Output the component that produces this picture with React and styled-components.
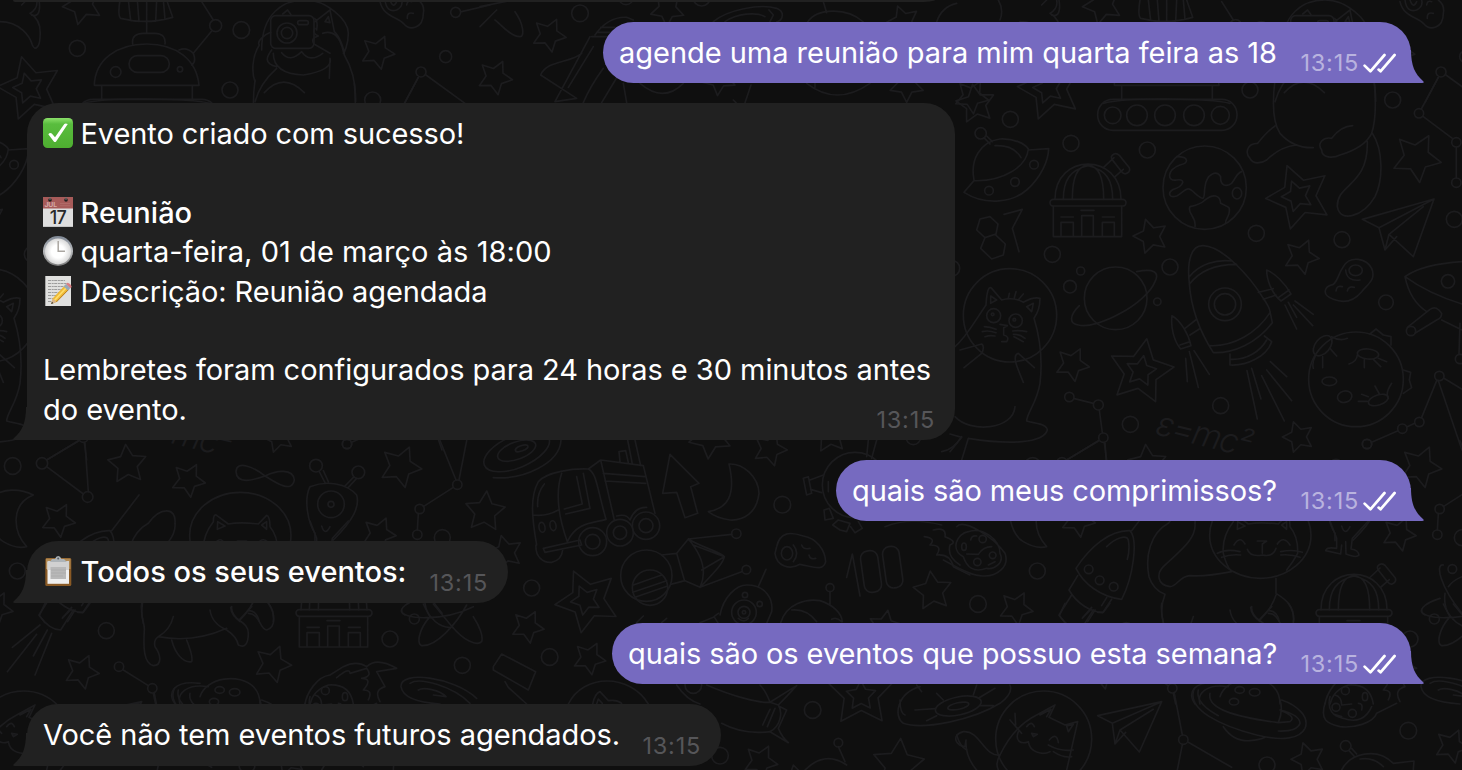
import React from 'react';
import styled, { createGlobalStyle, css } from 'styled-components';

const GlobalStyle = createGlobalStyle`
  html, body { margin: 0; background: #0f0f0f; }
  body { overflow: hidden; }
`;

const Screen = styled.main`
  position: relative;
  width: 1462px;
  height: 770px;
  overflow: hidden;
  background: #0f0f0f;
  color: #fff;
  font-family: Inter, 'Liberation Sans', sans-serif;
`;

const WallpaperSvg = styled.svg`
  position: absolute;
  inset: 0;
  fill: none;
  stroke: #1c1c1e;
  stroke-width: 5;
  stroke-linecap: round;
  stroke-linejoin: round;
`;

const Thread = styled.div`
  position: relative;
  display: flex;
  flex-direction: column;
  align-items: flex-start;
  gap: 20px;
  padding: 0 51px 0 27px;
`;

const PreviousBubble = styled.div`
  position: relative;
  width: 922px;
  height: 2px;
  margin-left: -14px;
  border-radius: 0 0 18px 2px / 0 0 2px 2px;
  background: #212121;
`;

const Bubble = styled.article`
  position: relative;
  box-sizing: border-box;
  display: flex;
  width: ${(p) => p.$width}px;
  height: ${(p) => p.$height}px;
  padding: 11px 20px 0 16px;
  ${(p) =>
    p.$out
      ? css`
          align-self: flex-end;
          background: #766ac0;
          border-radius: 30.5px 31px 0 30.5px;
          padding-right: 15px;
        `
      : css`
          background: #212121;
          border-radius: 31px 31px 31px 0;
        `}
`;

const TailSvg = styled.svg`
  position: absolute;
  bottom: 0;
  ${(p) => (p.$out ? 'right: -13px;' : 'left: -14px; transform: scaleX(-1);')}
  fill: ${(p) => (p.$out ? '#766ac0' : '#212121')};
`;

const Copy = styled.div`
  flex: 1;
  min-width: 0;
`;

const Line = styled.p`
  display: flex;
  align-items: center;
  gap: 7.5px;
  height: 39.42px;
  margin: 0;
  font-size: 29px;
  line-height: 39.42px;
  font-weight: ${(p) => (p.$strong ? 550 : 400)};
  letter-spacing: ${(p) => p.$track ?? -0.05}px;
  white-space: nowrap;
`;

const Meta = styled.footer`
  display: flex;
  align-items: center;
  align-self: flex-end;
  flex: none;
  gap: 4px;
  margin-bottom: 5px;
  color: ${(p) => (p.$out ? '#b9b3df' : '#565659')};
`;

const Time = styled.time`
  font-size: 23.5px;
  line-height: 30px;
  letter-spacing: 0.75px;
`;

const TicksSvg = styled.svg`
  margin-bottom: 1px;
`;

const EmojiSvg = styled.svg`
  flex: none;
  width: 30px;
  height: 30px;
  margin-bottom: 1px;
`;

function Tail({ out }) {
  return (
    <TailSvg $out={out} width="27" height="33" viewBox="0 0 27 33">
      <path d="M0 33V0H14C14 16 18 24 26 31Q28 33 25 33Z" />
    </TailSvg>
  );
}

function ReadTicks() {
  return (
    <TicksSvg width="33" height="20" viewBox="0 0 33 20" fill="none" stroke="#fff" strokeWidth="2.7" strokeLinecap="round" strokeLinejoin="round">
      <path d="M1.6 12.6 7.4 18.3 21.5 2" />
      <path d="M15.6 16.6 17.5 18.3 31.6 2" />
    </TicksSvg>
  );
}

function CheckEmoji() {
  return (
    <EmojiSvg viewBox="0 0 30 30">
      <defs>
        <linearGradient id="green" x2="0" y2="1">
          <stop offset="0" stopColor="#8be06a" />
          <stop offset=".2" stopColor="#59bd3e" />
          <stop offset="1" stopColor="#4eae30" />
        </linearGradient>
      </defs>
      <rect width="30" height="30" rx="4.5" fill="url(#green)" />
      <path d="M5.3 16.2Q7 14 8.8 15.5L12 19.2 21.3 6.1Q22.5 5 24.8 6.1L13.1 23.4Q12 24.6 10.8 23.4Z" fill="#fff" />
    </EmojiSvg>
  );
}

function CalendarEmoji() {
  return (
    <EmojiSvg viewBox="0 0 30 30">
      <path d="M0 0H30V30H0Z" fill="#dedede" />
      <path d="M0 0H30V11.5H0Z" fill="#a75b59" />
      <path d="M0 29H30V30H0Z" fill="#c5c5c5" />
      <g fill="#202020">
        <circle cx="7" cy="3" r="1.8" />
        <circle cx="23" cy="3" r="1.8" />
      </g>
      <path d="M7 0V3M23 0V3" stroke="#777" />
      <text x="1.4" y="10" fill="#d4aaa7" fontSize="6.8" fontWeight="700" letterSpacing="0">JUL</text>
      <path d="M17 6.5H27M17 8.7H27" stroke="#b06a67" strokeWidth="1" />
      <text x="14.8" y="27" fill="#292929" textAnchor="middle" fontSize="18" fontWeight="500" letterSpacing="-.8">17</text>
    </EmojiSvg>
  );
}

function ClockEmoji() {
  return (
    <EmojiSvg viewBox="0 0 30 30">
      <defs>
        <linearGradient id="rim" x2="0" y2="1">
          <stop offset="0" stopColor="#7e8794" />
          <stop offset=".5" stopColor="#b9bbbe" />
          <stop offset="1" stopColor="#777" />
        </linearGradient>
        <radialGradient id="face">
          <stop offset=".5" stopColor="#fff" />
          <stop offset="1" stopColor="#d8d8d8" />
        </radialGradient>
      </defs>
      <circle cx="15" cy="15" r="15" fill="url(#rim)" />
      <circle cx="15" cy="15.4" r="13" fill="url(#face)" />
      <path d="M15.2 5V15.3H22" fill="none" stroke="#aaa6a1" strokeWidth="1.5" />
    </EmojiSvg>
  );
}

function MemoEmoji() {
  return (
    <EmojiSvg viewBox="0 0 30 30">
      <path d="M2.3 0H28V30H2.3Z" fill="#e0e0de" />
      <g stroke="#8a8a8a" strokeWidth=".8" strokeDasharray="3 .7 2 .5">
        <path d="M5 4.5H22M5 7.5H25M5 10.5H22M5 13.5H19M5 16.5H17M5 19.5H14M5 22.5H12M5 25.5H10" />
      </g>
      <path d="M22 9.2 26 13.1 13.4 25.9 8.2 28 9.8 22.3Z" fill="#edb934" />
      <path d="M24 11 11.7 24.2" stroke="#ffdc68" strokeWidth="1.8" />
      <path d="M25.7 13.4 13.3 26" stroke="#b87818" strokeWidth="1" />
      <path d="M9.8 22.3 13.4 25.9 8.2 28Z" fill="#d9b58c" />
      <path d="M9 25.7 10.4 27.2 8.1 28Z" fill="#333" />
      <path d="M20.7 10.5 23 8 27.5 12.1 25 14.6Z" fill="#94a9ba" />
      <path d="M23 8 24.3 6.7Q28 7.5 28.7 10.9L27.3 12.2Z" fill="#d97f83" />
    </EmojiSvg>
  );
}

function ClipboardEmoji() {
  return (
    <EmojiSvg viewBox="0 0 30 30">
      <rect x="2.3" y="2" width="26" height="28" rx="1.5" fill="#8a5a25" />
      <path d="M3 2.6H27.5V13H3Z" fill="#b18a54" />
      <path d="M4.5 6H26V27.8H4.5Z" fill="#eee" />
      <path d="M4.5 5H26V14H4.5Z" fill="#d1d1d1" />
      <path d="M7.5 11H23V23H7.5Z" fill="#b8b8b8" />
      <path d="M8 14H23M8 17H23M8 20H20" stroke="#aaa" strokeWidth=".8" />
      <path d="M7 6 9 3H12Q13 0 15.2 0T18.4 3H21L24 6Z" fill="#aeb4b8" />
      <circle cx="15.2" cy="2.4" r="1" fill="#576068" />
    </EmojiSvg>
  );
}

const starPoints = ([x, y, r, turn]) =>
  Array.from({ length: 10 }, (_, i) => {
    const angle = ((turn + i * 36) * Math.PI) / 180;
    const size = i % 2 ? r * 0.51 : r;
    return `${(x + Math.cos(angle) * size).toFixed(1)},${(y + Math.sin(angle) * size).toFixed(1)}`;
  }).join(' ');

function Doodles({ at, stars = [], circles = [], ovals = [], path, children }) {
  return (
    <g transform={`translate(${at[0]} ${at[1]}) scale(.33333)`}>
      {stars.map((s, i) => <polygon key={i} points={starPoints(s)} />)}
      {circles.map(([cx, cy, r], i) => <circle key={i} cx={cx} cy={cy} r={r} />)}
      {ovals.map(([cx, cy, rx, ry, a = 0], i) => (
        <ellipse key={i} cx={cx} cy={cy} rx={rx} ry={ry} transform={`rotate(${a} ${cx} ${cy})`} />
      ))}
      <path d={path} />
      {children}
    </g>
  );
}

function Observatory({ x, y }) {
  return (
    <g transform={`translate(${x} ${y}) scale(.33333)`}>
      <path d="M-99-10C-99-151 99-151 99-10M-74-10C-74-68-54-98 0-111C56-98 74-68 74-10M-47-10C-47-68-34-111 0-111S47-68 47-10M-104 12V102H101V12M-81 102V59H-44V102M-19 102V39H16V102M43 102V59H79V102M-81 43H-44M-21 23H18M43 43H79M46-105 78-135M81-78 106-100M72-130Q66-140 78-146Q86-150 94-142L124-105Q128-93 116-88Q108-84 101-93Z" />
      <rect x="-114" y="-10" width="228" height="20" rx="10" />
    </g>
  );
}

function SpaceTile({ formula }) {
  return (
    <>
      <Doodles
        at={[0, 0]}
        stars={[[247, 15, 60, 175], [90, 265, 98, -105], [85, 265, 47, -105], [1133, 157, 52, -66]]}
        circles={[[232, 145, 24], [724, 90, 25], [1337, 170, 18], [347, 216, 16], [540, 208, 8], [647, 77, 18], [861, 99, 30], [861, 99, 17], [1263, 216, 15], [1367, 37, 15]]}
        path="M360 0C355 30 357 50 362 55Q440 75 518 52L500 0M385 0 392 62M412 0 417 65M440 0V66M470 0 467 64M490 0 495 58M440 65V100M398 132C395 108 410 100 430 100H465C490 100 497 115 495 132M283 256C285 180 350 132 440 132S590 180 597 256ZM305 258V298M577 258V298M250 310Q300 296 440 297T630 310M537 150Q560 140 580 160Q590 185 575 195M605 5 640 60M635 93 580 160M785 150C785 40 850 0 915 0S1045 60 1045 100C1045 140 1030 160 1030 160M848 42 863 30 873 44M945 65 990 30 1003 95C1020 110 1033 150 1033 165C1060 210 1068 260 1067 305M975 65 985 50 990 68ZM942 55Q955 60 950 90M968 100Q1015 85 1030 155M812 97C790 105 770 125 778 135C755 170 755 220 765 245M765 305Q780 250 830 205M815 150C800 170 790 190 830 200M820 160Q820 222 910 225Q1000 210 990 175L988 235M845 158Q870 190 905 155Q930 190 968 160M793 278Q850 215 913 278M945 85Q935 100 955 108Q930 115 942 132L990 160M1140 5C1150 50 1190 50 1210 70C1230 95 1270 85 1270 40Q1275 15 1255 0M1155 0Q1160 40 1190 30Q1210 20 1205 0M1170 0Q1180 28 1190 5M1220 15Q1222 0 1235 5M1222 55Q1220 35 1240 40M1255 232 1215 308M1278 225 1395 310M1385 35 1470 15M0 65C60 65 90 110 97 135C105 155 120 140 120 110Q125 60 90 40Q115 25 110 0"
      >
        <rect x="387" y="167" width="121" height="50" rx="25" />
        <rect x="812" y="47" width="130" height="98" rx="15" />
        <rect x="893" y="62" width="32" height="12" rx="6" />
      </Doodles>

      <Doodles
        at={[480, 0]}
        stars={[[45, 232, 53, -64], [207, 105, 52, -64], [562, 28, 52, 20], [1270, 65, 50, -110], [717, 235, 52, 95], [1280, 255, 52, 90], [1475, 290, 52, -60]]}
        circles={[[300, 40, 25], [665, -8, 26], [438, -8, 22]]}
        path="M0 20 100 0M0 80 50 30M105 35C130 70 135 110 120 110C90 110 60 70 45 60M345 105C370 70 400 50 440 52L460 60M335 110H380M350 97H390M362 82H405M330 110 225 305M305 160C270 190 200 180 182 225L290 295 225 305M340 140 265 262M370 205Q330 260 310 308M415 225 365 308M430 250 440 308M700 65C740 30 840 10 890 25C915 35 910 60 890 66M735 65C770 40 830 35 855 50M867 30 880 45 870 65M983 66C1010 25 1100 20 1150 66M1030 5 1040 38M480 250Q550 310 610 250M980 250Q1070 320 1170 250M1005 250V262M1370 66Q1385 20 1430 10M760 300 768 308M795 308 813 255"
      />

      <Doodles
        at={[960, 0]}
        stars={[[1017, 590, 100, -111], [1012, 588, 48, -111], [47, 312, 60, -99], [1370, 473, 75, -61], [572, 709, 53, -107]]}
        circles={[[151, 358, 24], [333, 430, 24], [562, 450, 24], [870, 270, 24], [1298, 300, 24], [889, 700, 24], [1146, 719, 24], [277, 763, 24], [1483, 658, 24], [458, 346, 25], [531, 346, 31], [615, 346, 31], [702, 346, 31], [781, 346, 27], [1377, 340, 14], [1489, 427, 14], [1489, 548, 14], [62, 400, 17], [222, 494, 13], [165, 546, 13], [87, 572, 13], [734, 563, 125]]}
        ovals={[[831, 580, 14, 17]]}
        path="M945 240C935 320 940 370 960 400Q1000 445 1060 443M1243 250C1250 330 1245 370 1235 400M945 378Q920 395 893 430C860 430 855 460 870 475C880 495 905 490 920 480Q960 440 1010 435M1178 377C1150 378 1130 395 1115 415C1090 410 1070 430 1085 450C1085 475 1120 475 1140 465C1190 450 1220 430 1235 400M1222 425C1225 560 1130 550 1132 620C1140 670 1210 650 1245 590C1270 540 1270 450 1237 400M1390 350 1477 415M1489 442V534M1435 232 1384 327M72 413 90 432M80 408 97 425M42 540C30 480 60 425 120 417C160 415 195 430 205 447C200 500 130 545 42 542L12 577C80 620 160 605 200 570C245 530 265 480 266 446L205 450M105 437C145 435 170 450 183 473M60 657 90 650 114 672 108 702 75 713 50 690ZM75 713 105 703 136 732 130 765 95 777 62 745ZM132 643 187 628 157 685 177 755M650 470C690 470 685 490 660 495C620 510 620 545 650 540C680 535 670 560 640 568C620 580 630 595 650 588C680 570 680 555 705 580C740 610 730 590 735 560C740 520 770 510 782 530C780 560 800 560 815 550C830 530 830 520 845 515M705 680C710 650 680 640 690 620C715 615 725 610 735 600C760 580 780 585 782 610C800 620 810 620 808 630C810 650 795 655 797 670M1422 597 1207 658 1257 683 1275 750 1310 710M1422 597 1360 770 1287 703 1275 750M1257 683 1422 597M1287 703 1390 620M115 0C130 25 125 50 120 60M245 15 260 0M275 45Q305 55 297 0"
      >
        <rect x="413" y="298" width="418" height="93" rx="45" />
      </Doodles>
      <Observatory x={1088} y={202.7} />
      <Observatory x={1354} y={613} />

      <Doodles
        at={[950, 230]}
        stars={[[1054, 80, 54, -66], [367, 403, 52, -63], [573, 425, 100, -80], [573, 423, 47, -80], [1045, 621, 48, -108]]}
        circles={[[497, 205, 94], [392, 123, 12], [360, 170, 19], [622, 215, 11], [660, 111, 24], [1308, 217, 22], [812, 527, 24], [541, 583, 24], [5, 115, 24], [180, 256, 140], [131, 257, 21], [197, 272, 20], [128, 253, 4], [193, 269, 4], [358, 501, 14], [445, 525, 15], [460, 623, 14], [1468, 438, 14], [1408, 576, 14], [1357, 596, 14], [1251, 642, 14], [825, 223, 49], [825, 223, 32], [1218, 448, 142], [1494, 154, 20], [1383, 303, 14], [1530, 387, 14]]}
        ovals={[[1217, 121, 20, 16], [1138, 454, 22, 13], [1184, 500, 22, 17, -15], [1254, 372, 32, 15, 5], [1118, 347, 35, 22, -50], [1285, 510, 31, 15, -18]]}
        path="M560 125C610 115 630 125 615 155C590 220 440 300 385 285C355 280 360 255 388 227M108 225C110 190 115 165 125 175L155 210Q190 200 220 217Q250 200 270 205Q270 240 252 265C275 340 277 400 270 460C260 520 230 550 230 573C250 580 290 580 292 600C280 640 180 645 55 625L35 690M108 225C70 280 50 320 15 350M122 220V198L140 210ZM230 230 250 220 245 245ZM150 283 172 287 161 293V315Q180 320 170 335L155 335M97 305Q115 300 138 308M103 290Q120 290 138 298M105 320Q120 315 135 318M188 303Q210 300 230 305M190 313Q210 312 225 325M192 320 220 335M175 205 178 190M193 203 198 185M207 207 220 192M30 360 95 342Q105 350 95 370L42 413M220 457C200 410 185 375 205 370L253 413M195 530C190 600 60 610 15 560M0 665 35 622 0 612M373 506 430 520M448 540 457 608M463 638 470 690M447 632 350 690M1460 452 1415 562M1394 580 1372 590M1344 602 1265 637M1482 445 1536 478M1465 452 1536 660M718 160C710 90 725 45 760 47C820 50 900 140 940 205Q960 235 960 245L967 278C920 340 850 370 790 368C740 290 722 220 718 160ZM718 140C750 100 800 88 845 93M718 163C750 120 800 103 860 103M780 347C850 350 920 310 960 248M840 372V405C890 408 950 380 965 335L943 318M843 388C890 390 930 365 950 330M950 120C975 130 1005 160 1023 192L993 213C965 190 950 150 950 120ZM1017 180 985 203M925 187 970 176M940 208 978 195M666 257C690 270 715 310 723 347L692 357C670 330 662 290 666 257ZM720 335 690 345M705 295 737 270M720 315 748 297M707 385 712 455M718 365 745 472M732 362 778 433M1005 225 1040 297M1015 217 1040 262M1035 213 1090 253M1030 225 1088 287M891 422 922 567M905 415 933 507M935 437 1003 573M950 420 1025 512M961 395 1010 440M1180 110C1200 75 1250 85 1265 115C1280 150 1250 165 1235 185C1210 215 1180 220 1150 208C1115 195 1120 170 1150 163C1165 150 1165 130 1180 110ZM1187 120Q1190 155 1230 150M1158 183Q1160 165 1177 170M1192 183Q1195 167 1213 172M1145 320Q1170 335 1192 325M1140 355 1160 378M1118 380V413M1097 375Q1085 400 1090 415M1260 312 1278 297 1300 315 1323 320V345M1222 375Q1220 395 1197 402M1243 388V413M1270 388 1292 410M1285 385 1310 395M1360 420 1382 427 1378 450 1385 473 1360 490M1275 468 1288 492M1325 460Q1305 490 1315 505M1235 493 1255 500M1225 514H1252M1536 95C1460 100 1400 115 1365 140C1420 180 1480 205 1536 222M1365 140C1375 190 1400 225 1430 245M1475 270 1536 300M1372 292 1440 238Q1460 225 1475 250Q1475 265 1460 270L1395 310M1530 280 1527 372"
      >
        {formula && (
          <text x="613" y="612" transform="rotate(14 613 612)" fill="#1c1c1e" stroke="none" fontFamily="Inter" fontWeight="300" fontStyle="italic" fontSize="102" letterSpacing="-5">ε=mc²</text>
        )}
      </Doodles>

      <Doodles
        at={[0, 400]}
        stars={[[382, 193, 60, -95], [565, 240, 52, -62], [175, 360, 52, -62], [245, 815, 53, -66], [818, 792, 57, -68], [1455, 335, 62, -85], [1137, 402, 52, -66]]}
        circles={[[38, 198, 25], [52, 513, 24], [319, 692, 24], [1170, 717, 24], [1387, 796, 24], [1327, 413, 24], [126, 190, 17], [263, 291, 16], [1372, 254, 14], [1259, 327, 14], [1252, 404, 14], [1243, 657, 15], [357, 800, 14], [457, 865, 14], [948, 197, 19], [1075, 217, 19], [993, 313, 40], [993, 313, 9], [976, 872, 12], [1041, 132, 14]]}
        ovals={[[659, 870, 14, 10], [704, 877, 16, 11], [642, 905, 14, 10], [1035, 890, 8, 12]]}
        path="M140 180 235 122M255 130 265 275M140 200 250 282M1320 122 1368 240M1400 122 1377 240M1360 262 1270 320M1255 341 1252 390M370 810 445 857M460 880 467 912M100 285C60 265 10 265-25 290C-40 330-30 400 10 425C35 440 60 445 80 440C35 390 35 310 100 285M425 610C420 650 435 670 433 690C430 740 430 790 460 797C490 795 480 760 465 740Q460 720 475 710Q510 690 520 650M475 710Q580 730 680 685M515 720C525 760 550 790 575 785Q580 770 560 720M630 630Q635 670 680 690Q710 710 715 735C735 745 745 730 745 700C745 660 695 665 692 622M720 657 755 620M745 640C780 640 780 690 800 690C830 680 825 640 805 610M445 370C480 320 530 320 525 370M120 675 37 742M110 703 22 815M142 690 100 768M155 700 105 825M135 610 118 647Q150 690 182 690M233 637 250 637 270 610M187 655 215 622M182 690 220 630M958 215 975 248M970 212 985 245M1060 232 1035 258M1070 235 1045 262M930 260C980 240 1040 250 1070 285C1080 320 1060 360 1000 420M930 260C910 300 925 370 945 400V422M965 378Q975 410 990 380M795 228C760 200 710 180 708 215C710 255 760 240 795 228C830 210 880 205 883 240C875 280 830 250 795 228ZM1205 630C1200 660 1330 665 1420 620M1270 612Q1300 680 1350 683M1300 612 1360 685M1290 650C1255 690 1250 730 1265 737C1310 740 1370 670 1400 615M1357 680C1390 720 1430 740 1445 725C1450 710 1440 680 1420 650M600 890C620 830 720 820 760 860Q780 880 780 912M600 850C520 840 500 880 525 912M625 860C560 850 530 880 540 912M915 912C920 880 950 830 990 825L1030 800Q1070 780 1100 800Q1130 770 1190 805Q1160 810 1130 815L1155 860Q1120 870 1140 905M1010 833Q1050 800 1050 820L1100 805Q1120 830 1085 835Q1120 835 1090 870Q1120 870 1105 900M930 912Q940 870 985 855Q1050 850 1060 912M1430 895C1360 830 1200 810 1203 860Q1210 905 1320 912M1230 850C1260 830 1360 860 1410 910M1255 870C1270 860 1320 870 1338 890L1300 885"
      />

      <Doodles
        at={[950, 430]}
        stars={[[1412, 110, 64, -66], [198, 535, 52, -62], [1075, 988, 52, -108], [1505, 948, 52, -66]]}
        circles={[[84, 522, 25], [1375, 902, 25], [951, 1005, 24], [416, 418, 13], [449, 451, 13], [491, 470, 13], [700, 929, 14], [1507, 417, 13], [1158, 832, 12], [1207, 850, 12], [281, 927, 144], [1187, 948, 16], [98, 327, 11], [128, 376, 10], [82, 396, 11]]}
        ovals={[[931, 316, 152, 129], [42, 350, 7, 11]]}
        path="M850 275Q850 250 860 256L895 282Q930 275 985 282L1010 256Q1020 260 1020 290Q1045 320 1043 370Q1030 395 1010 420M850 275Q815 320 820 370Q830 410 845 425M862 298 863 275 885 288ZM995 285 1010 275V298ZM852 345Q870 315 885 342M982 342Q1000 315 1020 345M922 333H950L937 342V370M892 358Q900 382 937 375Q970 382 978 355M802 370Q830 355 870 365M815 382Q840 372 872 375M1057 367Q1030 357 992 365M1050 382Q1025 372 992 375M845 425Q770 440 720 437C690 437 680 470 660 470C620 465 620 430 640 410C680 370 740 330 735 280M655 280C600 310 585 380 597 440Q610 480 645 493C630 530 635 560 640 580M978 445V490C1010 510 1035 530 1030 575M978 495Q965 535 930 570M905 530Q902 550 930 575M953 542Q980 540 988 575M378 415C420 350 480 300 540 302C565 330 550 440 515 508C450 500 400 460 378 415ZM383 437 357 480C380 520 420 545 458 548L485 508M365 495 327 555 345 578M455 527 470 503M398 563 425 537M413 575 435 540M545 302 627 195M470 350C500 320 530 315 535 330Q540 360 532 388M1140 273 1160 325V355Q1130 350 1127 362L1172 372 1175 345M1187 335 1188 372Q1220 385 1227 375Q1225 360 1203 357L1207 325 1255 273M673 790 697 915M715 937 845 1012M697 944 682 1020M1480 405C1455 400 1470 470 1536 550M1495 470Q1510 450 1536 440M1470 505C1420 520 1400 545 1425 555M1485 490Q1480 530 1500 560M733 775C705 840 820 890 920 915C1000 935 1050 925 1065 895C1080 860 1040 825 995 810M990 840Q1050 855 1050 880Q1040 905 985 903M745 780Q735 820 805 857M780 790C770 835 850 860 985 878Q1000 840 990 810M995 843Q1040 860 1020 875L985 878M820 890Q850 935 900 932Q930 930 945 922M1125 820C1110 870 1130 880 1170 890C1210 895 1270 880 1280 850L1340 820M1140 800C1130 840 1150 860 1180 865C1220 880 1250 865 1265 830M1155 795Q1175 800 1175 825L1205 822M1152 853 1175 860M1225 820Q1240 820 1235 840M150 975C100 980 90 900 40 905C0 915 20 950 45 950L48 930Q45 980 80 1020M150 975Q190 890 260 855L315 825 297 862 345 885 383 875 350 1020M270 855 303 838 290 860M350 888 370 883 355 905ZM230 890Q245 870 253 890M298 930Q320 905 325 938M205 905C195 930 210 945 235 935C240 970 280 975 300 965M245 910 262 913 250 920ZM150 975Q135 1000 145 1020M180 870 215 910M195 850 197 885M295 945Q330 965 370 960M310 965Q340 985 365 980M635 815 443 857 487 880 495 942 527 907M635 815 568 966 510 900 495 942M487 880 635 815M510 900 610 838M1197 962 1212 978M1205 955 1220 972M1175 1020C1200 970 1280 950 1330 1000L1392 993 1390 1020M1230 987Q1270 980 1300 1010M20 290C40 265 130 320 165 370C180 410 140 440 100 438C60 440 0 400-20 390M40 380C0 360 20 310 55 305C100 290 150 330 150 370C165 400 130 420 110 415C70 430 50 410 40 380ZM50 372 85 373Q100 350 125 350M62 330Q65 315 80 318M115 405 135 395"
      />

      <Doodles
        at={[480, 430]}
        stars={[[77, 367, 52, -105], [322, 512, 98, -115], [317, 510, 46, -115], [143, 590, 50, -63], [328, 685, 50, -63], [690, 22, 65, 95], [870, 57, 52, 75], [1050, 15, 55, 120], [1358, 483, 60, -97], [1143, 788, 105, 125], [1143, 797, 46, 125], [842, 995, 52, -63], [1255, 1005, 80, -85], [1215, 590, 50, -80]]}
        circles={[[155, 474, 24], [907, 224, 25], [209, 681, 25], [998, 840, 25], [720, 977, 25], [640, 765, 25], [1300, 22, 22], [338, 335, 42], [338, 335, 22], [420, 308, 40], [420, 308, 20], [498, 287, 41], [498, 287, 21], [499, 437, 77], [510, 473, 53], [769, 311, 14], [799, 419, 13], [792, 547, 37], [792, 547, 18], [792, 547, 5], [795, 495, 8], [839, 522, 8], [1050, 473, 12], [1125, 165, 98], [1075, 938, 13]]}
        ovals={[[110, 65, 105, 48, -23], [110, 62, 60, 26, -20], [125, 55, 20, 8, -20], [186, 292, 9, 15, -10], [219, 287, 9, 15, -10], [921, 370, 17, 20], [1435, 828, 70, 27, -12], [1435, 828, 32, 10, -12]]}
        path="M40 143C130 150 240 100 243 30M170 345C155 260 150 200 175 155C200 125 280 115 325 117L362 90 490 107 525 250M362 90 403 270M325 117C350 130 350 170 378 268C340 280 290 275 262 335C235 260 225 190 245 130M160 255Q200 260 235 240M173 230Q170 190 193 162M290 140 307 222 253 237M310 130 330 235 257 252M370 130 495 140M375 153 497 160M420 95 417 65 437 62 445 98M443 30 457 102M465 30 482 107M168 345C165 380 190 400 215 397Q245 390 248 360M190 355 300 330 305 345 195 367ZM410 258Q440 250 450 270Q465 230 500 232M570 73 657 160 632 170 653 250 615 263 590 187 548 190ZM747 102C790 100 835 140 837 190C830 250 790 272 750 270Q710 265 685 245C740 235 770 200 747 102ZM460 465 545 435M458 487 560 452M465 502 563 468M545 375 590 370 625 327C670 380 680 430 660 472L615 452 572 463M590 370 613 450M625 327C660 350 720 365 733 380C730 400 700 430 665 467M640 345 733 380M665 420 733 380M625 327 755 313M660 472 785 425M890 350C900 305 930 305 970 318C1010 325 1035 360 1037 395C1030 425 1000 410 960 403C930 420 890 410 885 370ZM940 345Q960 370 940 395M965 345Q970 360 990 355M987 375Q990 390 1007 385M1100 442 1117 372 1140 498M1215 290Q1290 260 1385 285M1333 320Q1370 325 1350 345Q1390 345 1370 375Q1410 370 1420 410L1470 435M1360 300Q1400 290 1395 320Q1435 335 1410 345Q1400 380 1440 405M720 555C730 500 770 465 800 465C860 465 880 510 875 545L860 580M835 470 858 418M775 565Q792 580 805 565M715 550 702 560 715 580M660 578 700 562M470 578 490 558M545 578 560 565M902 578C920 520 980 505 1020 512C1060 525 1085 550 1087 575M935 540Q980 535 1010 575M1055 568Q1070 560 1085 575M1050 485V522M40 710 65 672 167 725 145 780 40 720ZM75 755 85 772 140 822M265 822C310 730 450 730 505 822M338 822Q345 790 360 785L385 812Q410 808 425 820M350 822 355 807 367 820M590 765Q620 810 660 822M680 765C760 800 840 820 870 817C860 790 850 775 840 765M725 880C780 910 830 910 870 905C900 890 910 850 895 825L870 817 950 767Q920 800 895 825M870 905 925 938Q905 920 895 895M848 885 870 838M862 890 885 835M895 895 920 840 900 830M1030 135 990 150M1025 188 992 178M970 145 985 140 995 190 980 195ZM1032 240 1048 235 1060 265 1035 270ZM1058 285 1075 270 1110 280 1100 305 1080 300ZM1112 290 1125 308 1147 295 1135 275M1045 155V185M1160 80 1165 30M1175 85 1190 30M1385 65Q1420 60 1445 20M1320 770C1250 790 1240 860 1270 880C1330 900 1480 870 1560 820Q1600 790 1590 765M1260 810Q1260 850 1275 855M1310 765 1325 785M1305 840 1365 836M1370 790 1390 810M1340 872 1370 857M1490 765 1480 795M1495 805 1545 775M1500 827H1540M1430 915Q1440 950 1460 960M1075 950 1095 995M975 1020Q1035 960 1100 1005M935 1020 940 1005 955 1020"
      >
        <rect x="1147" y="362" width="52" height="125" rx="22" transform="rotate(-8 1173 424)" />
        <rect x="1213" y="349" width="50" height="125" rx="22" transform="rotate(-8 1238 411)" />
      </Doodles>
    </>
  );
}

function Wallpaper() {
  return (
    <WallpaperSvg width="1462" height="770" viewBox="0 0 1462 770" aria-hidden="true">
      <SpaceTile formula />
      <g transform="translate(-1020 0)"><SpaceTile formula /></g>
      <g transform="translate(1020 0)"><SpaceTile /></g>
    </WallpaperSvg>
  );
}

function Message({ out, width, height, children }) {
  return (
    <Bubble $out={out} $width={width} $height={height}>
      <Tail out={out} />
      <Copy>{children}</Copy>
      <Meta $out={out}>
        <Time>13:15</Time>
        {out && <ReadTicks />}
      </Meta>
    </Bubble>
  );
}

export default function App() {
  return (
    <Screen>
      <GlobalStyle />
      <Wallpaper />
      <Thread>
        <PreviousBubble />
        <Message out width={808} height={61}>
          <Line $track={-0.03}><span>agende uma reunião para mim quarta feira as 18</span></Line>
        </Message>
        <Message width={928} height={337}>
          <Line $track={-0.1}><CheckEmoji /><span>Evento criado com sucesso!</span></Line>
          <Line />
          <Line $strong $track={0}><CalendarEmoji /><span>Reunião</span></Line>
          <Line $track={0.06}><ClockEmoji /><span>quarta-feira, 01 de março às 18:00</span></Line>
          <Line $track={-0.1}><MemoEmoji /><span>Descrição: Reunião agendada</span></Line>
          <Line />
          <Line><span>Lembretes foram configurados para 24 horas e 30 minutos antes</span></Line>
          <Line><span>do evento.</span></Line>
        </Message>
        <Message out width={575} height={61}>
          <Line $track={-0.1}><span>quais são meus comprimissos?</span></Line>
        </Message>
        <Message width={481} height={62}>
          <Line $strong $track={0}><ClipboardEmoji /><span>Todos os seus eventos:</span></Line>
        </Message>
        <Message out width={799} height={61}>
          <Line $track={-0.08}><span>quais são os eventos que possuo esta semana?</span></Line>
        </Message>
        <Message width={694} height={62}>
          <Line><span>Você não tem eventos futuros agendados.</span></Line>
        </Message>
      </Thread>
    </Screen>
  );
}
